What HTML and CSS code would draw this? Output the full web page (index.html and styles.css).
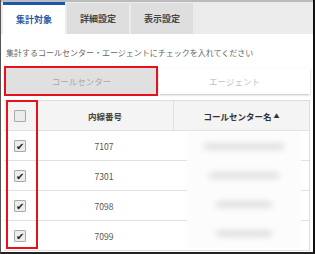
FILE: index.html
```html
<!DOCTYPE html>
<html lang="ja">
<head>
    <meta charset="UTF-8">
    <title>集計対象</title>
    <link rel="stylesheet" href="styles.css">
</head>
<body>
<div class="frame">
    <div class="tabs">
        <div class="tab active">集計対象</div>
        <div class="tab">詳細設定</div>
        <div class="tab">表示設定</div>
    </div>

    <p class="hint">集計するコールセンター・エージェントにチェックを入れてください</p>

    <div class="switch">
        <div class="sw-btn on">コールセンター</div>
        <div class="sw-btn">エージェント</div>
    </div>

    <div class="table">
        <div class="row head">
            <div class="c-chk"><span class="box"></span></div>
            <div class="c-num">内線番号</div>
            <div class="c-name">コールセンター名 <span class="arrow">▲</span></div>
        </div>
        <div class="row">
            <div class="c-chk"><span class="box checked">✔</span></div>
            <div class="c-num">7107</div>
            <div class="c-name"></div>
        </div>
        <div class="row">
            <div class="c-chk"><span class="box checked">✔</span></div>
            <div class="c-num">7301</div>
            <div class="c-name"></div>
        </div>
        <div class="row">
            <div class="c-chk"><span class="box checked">✔</span></div>
            <div class="c-num">7098</div>
            <div class="c-name"></div>
        </div>
        <div class="row">
            <div class="c-chk"><span class="box checked">✔</span></div>
            <div class="c-num">7099</div>
            <div class="c-name"></div>
        </div>
        <div class="mark-col"></div>
        <!-- 名前は伏せてある -->
        <div class="name-cover">
            <span class="blur w1"></span>
            <span class="blur w2"></span>
            <span class="blur w3"></span>
            <span class="blur w3"></span>
        </div>
    </div>
    <div class="mark-switch"></div>
</div>
</body>
</html>
```

FILE: styles.css
```css
body {
    margin: 0;
    font-family: "Noto Sans CJK JP", "Noto Sans", sans-serif;
    color: #555;
}
.frame {
    position: relative;
    width: 312px;
    height: 252px;
    border-left: 1px solid #555;
    border-right: 2px solid #111;
    border-bottom: 2px solid #222;
    overflow: hidden;
    background: #fff;
}
.tabs {
    display: flex;
    gap: 2px;
    height: 32px;
    padding: 0 0 0 2px;
    background: #ebebeb;
    border-top: 2px solid #bbb;
}
.tab {
    width: 62px;
    display: flex;
    align-items: center;
    justify-content: center;
    font-size: 9px;
    font-weight: bold;
    color: #444;
    background: #dedede;
    margin-top: 1px;
}
.tab.active {
    background: #fff;
    color: #2a5aa6;
    border-top: 3px solid #1b56b0;
    margin-top: 0;
}
.hint {
    margin: 13px 0 0 5px;
    font-size: 8px;
    line-height: 12px;
    color: #666;
    white-space: nowrap;
}
.switch {
    display: flex;
    margin: 9px 3px 0 5px;
    gap: 2px;
}
.sw-btn {
    flex: 1;
    height: 26px;
    display: flex;
    align-items: center;
    justify-content: center;
    font-size: 8.5px;
    color: #c2c2c2;
    background: #fff;
    box-shadow: 0 1px 2px rgba(0,0,0,0.25);
}
.sw-btn.on {
    background: #e0e0e0;
    color: #a8a8a8;
    box-shadow: none;
}
.mark-switch {
    position: absolute;
    left: 3px;
    top: 66px;
    width: 150px;
    height: 26px;
    border: 2px solid #e8101a;
}
.table {
    position: relative;
    margin: 6px 3px 0 3px;
    border-top: 1px solid #ddd;
    border-right: 1px solid #ddd;
}
.row {
    display: flex;
    height: 29px;
    border-bottom: 1px solid #e2e2e2;
}
.row.head {
    height: 29px;
    background: #f4f4f4;
    font-weight: bold;
    color: #444;
}
.row > div {
    display: flex;
    align-items: center;
    justify-content: center;
    font-size: 8.5px;
}
.c-chk {
    width: 32px;
}
.c-num {
    width: 136px;
    color: #555;
}
.row.head .c-num {
    color: #444;
    border-left: 1px solid #e2e2e2;
}
.c-name {
    flex: 1;
}
.row.head .c-name {
    border-left: 1px solid #e2e2e2;
    color: #333;
}
.arrow {
    font-size: 6px;
    margin-left: 2px;
}
.box {
    width: 10px;
    height: 10px;
    border: 1px solid #a8a8a8;
    background: #ececec;
    border-radius: 1px;
    font-size: 10px;
    line-height: 10px;
    text-align: center;
    color: #222;
}
.name-cover {
    position: absolute;
    left: 183px;
    top: 31px;
    width: 114px;
    height: 116px;
    background: #fcfcfc;
    display: flex;
    flex-direction: column;
    align-items: center;
    justify-content: space-around;
}
.blur {
    display: block;
    height: 5px;
    background: #d6d6d6;
    border-radius: 3px;
    filter: blur(3px);
}
.w1 { width: 80px; }
.w2 { width: 70px; }
.w3 { width: 56px; }
.mark-col {
    position: absolute;
    left: 2px;
    top: -1px;
    width: 28px;
    height: 145px;
    border: 2px solid #e8101a;
    z-index: 2;
}
```
